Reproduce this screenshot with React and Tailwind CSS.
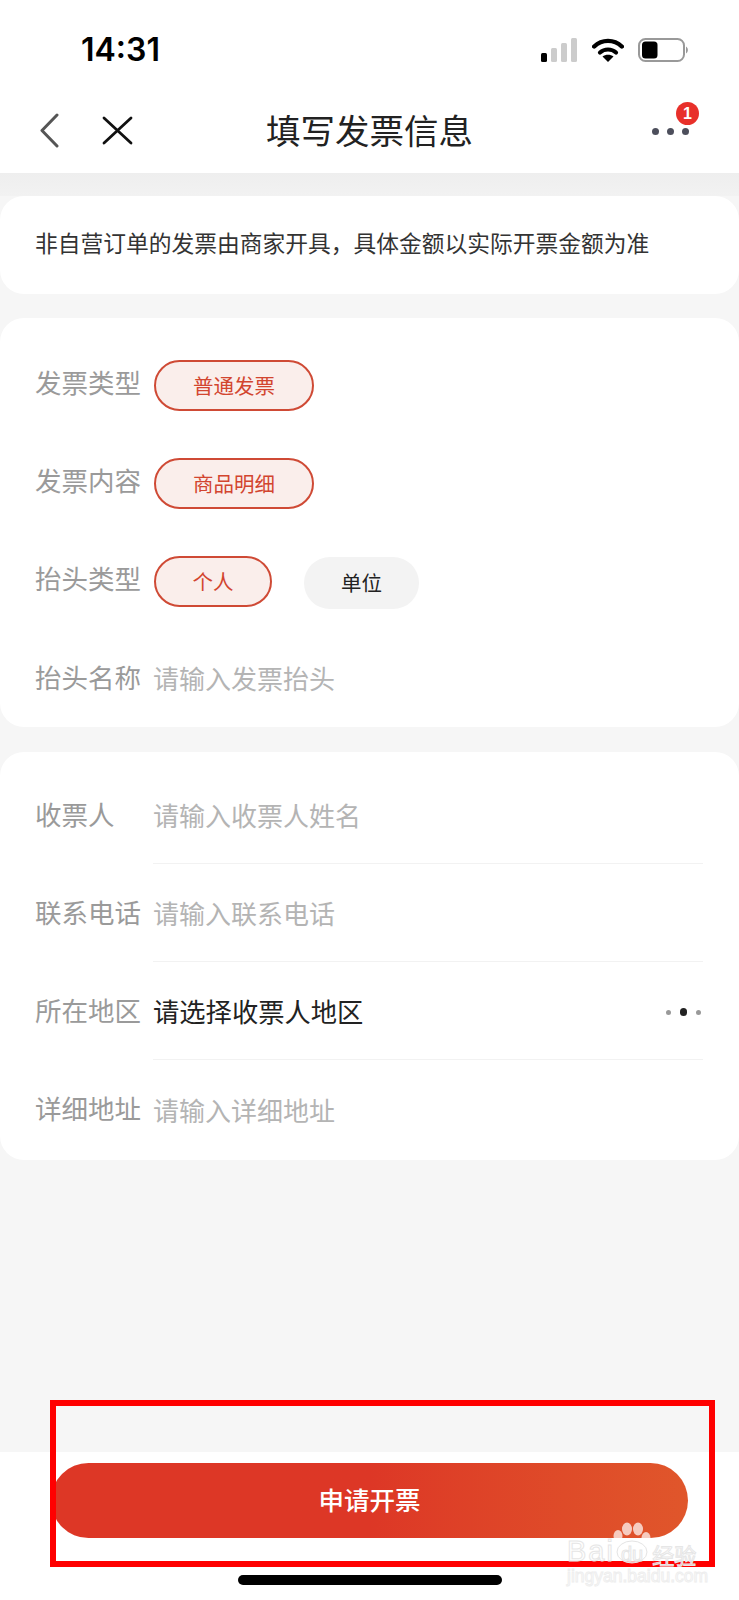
const cjk = "font-['Noto_Sans_CJK_SC','Liberation_Sans',sans-serif]";

const Chip = ({ children, className, active = true }) => (
  <div
    className={`flex items-center justify-center rounded-full text-[20.5px] ${className} ${
      active
        ? "h-[51px] border-2 border-[#cf4a35] bg-[#faeeeb] text-[#d2452f]"
        : "h-[52px] bg-[#f3f3f3] text-[#222222]"
    }`}
  >
    {children}
  </div>
);

const Label = ({ children, offset = "-mt-[6px]" }) => (
  <div className={`w-[118px] shrink-0 text-[26.500px] leading-none text-[#9a9a9a] whitespace-nowrap ${offset}`}>
    {children}
  </div>
);

const Row = ({ label, offset, children }) => (
  <div className="flex items-center h-[98px]">
    <Label offset={offset}>{label}</Label>
    {children}
  </div>
);

const InputRow = ({ label, placeholder, last }) => (
  <div className="flex items-center h-[98px]">
    <Label offset="-mt-[2px]">{label}</Label>
    <div className={`flex-1 h-full flex items-center text-[26px] text-[#b4b4b4] ${last ? "" : "border-b border-[#f2f2f2]"}`}>
      <span>{placeholder}</span>
    </div>
  </div>
);

const StatusIcons = () => (
  <div className="flex items-center">
    <svg width="36" height="24" viewBox="0 0 36 24" className="mr-[15px]">
      <rect x="0" y="15" width="6" height="9" rx="1.5" fill="#000" />
      <rect x="10" y="10" width="6" height="14" rx="1.5" fill="#cccccc" />
      <rect x="20" y="5" width="6" height="19" rx="1.5" fill="#cccccc" />
      <rect x="30" y="0" width="6" height="24" rx="1.5" fill="#cccccc" />
    </svg>
    <svg width="32" height="24" viewBox="0 0 32 24" className="mr-[14px]">
      <path d="M2.200 8.500 C10 1 22 1 29.800 8.500" fill="none" stroke="#000" strokeWidth="4.400" strokeLinecap="round" />
      <path d="M8 14.500 C12.500 10.500 19.500 10.500 24 14.500" fill="none" stroke="#000" strokeWidth="4.200" strokeLinecap="round" />
      <path d="M10.500 18.500 C13.500 16 18.500 16 21.500 18.500 L16 24 Z" fill="#000" />
    </svg>
    <svg width="51" height="24" viewBox="0 0 51 24">
      <rect x="1" y="1" width="45" height="22" rx="6.500" fill="none" stroke="#999999" strokeWidth="2" />
      <rect x="4" y="3.500" width="15.500" height="17" rx="3.500" fill="#000" />
      <path d="M48 8.500 C50.500 10 50.500 14 48 15.500 Z" fill="#999999" />
    </svg>
  </div>
);

const Watermark = () => (
  <div className="absolute left-[567px] top-[1520px] w-[134px] h-[66px] pointer-events-none">
    <svg width="42" height="46" viewBox="0 0 42 46" className="absolute left-[45px] top-0">
      <g fill="#ffffff" fillOpacity="0.7">
        <ellipse cx="15" cy="9" rx="5" ry="6.500" />
        <ellipse cx="26" cy="9" rx="5" ry="6.500" />
        <ellipse cx="6" cy="16" rx="4.500" ry="6" />
        <ellipse cx="34" cy="18" rx="4.500" ry="6" />
        <ellipse cx="20" cy="32" rx="15" ry="11" stroke="#e4e4e4" strokeWidth="1" />
      </g>
    </svg>
    <div className="absolute left-0 top-[17px] flex items-end font-['Liberation_Sans',sans-serif] text-white/70 [-webkit-text-stroke:1px_#e6e6e6] leading-none">
      <span className="text-[29px] tracking-[2px] leading-none">Bai</span>
      <span className="ml-[6px] text-[20px] leading-none mb-[2px]">du</span>
      <span className={`ml-[9px] text-[22px] leading-none mb-[1px] ${cjk}`}>经验</span>
    </div>
    <div className="absolute left-0 top-[48px] font-['Liberation_Sans',sans-serif] text-[17.500px] leading-none whitespace-nowrap text-white/70 [-webkit-text-stroke:1px_#eeeeee]">
      jingyan.baidu.com
    </div>
  </div>
);

export default function App() {
  return (
    <div className={`relative flex flex-col h-[1600px] overflow-hidden bg-[#f6f6f6] ${cjk}`}>
      <header className="bg-white h-[173px] shrink-0 px-[40px] flex flex-col">
        <div className="flex items-center justify-between h-[98px] pl-[41px] pr-[10px] pt-[1px]">
          <span className="font-['Inter',sans-serif] font-semibold text-[32px] leading-none text-black">14:31</span>
          <StatusIcons />
        </div>
        <div className="relative flex items-center justify-center h-[60px]">
          <svg width="20" height="36" viewBox="0 0 20 36" className="absolute left-0 top-[15px]" fill="none" stroke="#555555" strokeWidth="3" strokeLinecap="round" strokeLinejoin="round">
            <path d="M17 2 L2 17.500 L17 33" />
          </svg>
          <svg width="31" height="30" viewBox="0 0 31 30" className="absolute left-[62px] top-[18px]" fill="none" stroke="#111111" strokeWidth="2.800" strokeLinecap="round">
            <path d="M2 2 L29 27 M29 2 L2 27" />
          </svg>
          <h1 className="text-[34.500px] leading-none font-normal text-[#222222] mt-[2px]">填写发票信息</h1>
          <div className="absolute right-[5px] top-[2px] w-[42px] h-[44px]">
            <div className="absolute left-0 top-[28px] flex gap-[8px]">
              <span className="w-[7px] h-[7px] rounded-full bg-[#4d4f5c]" />
              <span className="w-[7px] h-[7px] rounded-full bg-[#4d4f5c]" />
              <span className="w-[7px] h-[7px] rounded-full bg-[#4d4f5c]" />
            </div>
            <span className="absolute left-[24px] top-[2px] w-[23px] h-[23px] rounded-full bg-[#e8302a] text-white flex items-center justify-center font-['Liberation_Sans',sans-serif] font-bold text-[16px] leading-none">1</span>
          </div>
        </div>
      </header>

      <div className="h-[23px] shrink-0 bg-gradient-to-b from-[#eeeeee] to-[#f2f2f2]" />

      <section className="h-[98px] shrink-0 bg-white rounded-[24px] pl-[35px] flex items-center text-[22.750px] text-[#333333] whitespace-nowrap">
        <span className="-mt-[3px]">{"非自营订单的发票由商家开具\uFF0C具体金额以实际开票金额为准"}</span>
      </section>

      <section className="mt-[24px] h-[409px] shrink-0 bg-white rounded-[24px] pl-[35px] pt-[18px]">
        <Row label="发票类型">
          <Chip className="ml-[1px] w-[160px]">普通发票</Chip>
        </Row>
        <Row label="发票内容">
          <Chip className="ml-[1px] w-[160px]">商品明细</Chip>
        </Row>
        <Row label="抬头类型">
          <div className="flex items-center gap-[32px] ml-[1px]">
            <Chip className="w-[118px]">个人</Chip>
            <Chip className="w-[115px] mt-[3px]" active={false}>单位</Chip>
          </div>
        </Row>
        <Row label="抬头名称" offset="-mt-[4px]">
          <span className="text-[26px] text-[#b4b4b4] -mt-[4px]">请输入发票抬头</span>
        </Row>
      </section>

      <section className="mt-[25px] h-[408px] shrink-0 bg-white rounded-[24px] pl-[35px] pr-[36px] pt-[14px]">
        <InputRow label="收票人" placeholder="请输入收票人姓名" />
        <InputRow label="联系电话" placeholder="请输入联系电话" />
        <div className="flex items-center h-[98px]">
          <Label offset="-mt-[2px]">所在地区</Label>
          <div className="flex-1 h-full flex items-center justify-between border-b border-[#f2f2f2] text-[26.300px] text-[#222222]">
            <span>请选择收票人地区</span>
            <div className="flex items-center gap-[9px] pr-[2px] mt-[3px]">
              <span className="w-[5px] h-[5px] rounded-full bg-[#999999]" />
              <span className="w-[7px] h-[8px] rounded-full bg-[#222222]" />
              <span className="w-[5px] h-[5px] rounded-full bg-[#999999]" />
            </div>
          </div>
        </div>
        <InputRow label="详细地址" placeholder="请输入详细地址" last />
      </section>

      <div className="flex-1" />

      <footer className="h-[148px] shrink-0 bg-white px-[50px] pt-[11px] flex flex-col items-center">
        <button className="w-[637px] h-[75px] shrink-0 rounded-full bg-gradient-to-r from-[#dd3726] from-50% to-[#e0562b] text-white text-[25.500px] font-medium pb-[2px]">
          申请开票
        </button>
        <div className="mt-[37px] w-[264px] h-[10px] rounded-full bg-black" />
      </footer>

      {/* annotation box drawn over the screenshot */}
      <div className="absolute left-[50px] top-[1400px] w-[665px] h-[167px] border-[6px] border-[#ff0000] pointer-events-none" />
      <Watermark />
    </div>
  );
}
